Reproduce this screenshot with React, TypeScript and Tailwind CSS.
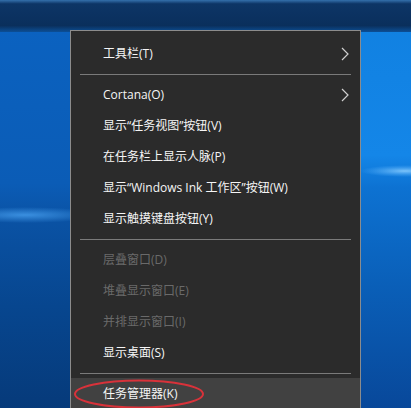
import React from "react";

type Item = { label: string; disabled?: boolean; arrow?: boolean; active?: boolean } | "sep";

const items: Item[] = [
  { label: "工具栏(T)", arrow: true },
  "sep",
  { label: "Cortana(O)", arrow: true },
  { label: "显示“任务视图”按钮(V)" },
  { label: "在任务栏上显示人脉(P)" },
  { label: "显示“Windows Ink 工作区”按钮(W)" },
  { label: "显示触摸键盘按钮(Y)" },
  "sep",
  { label: "层叠窗口(D)", disabled: true },
  { label: "堆叠显示窗口(E)", disabled: true },
  { label: "并排显示窗口(I)", disabled: true },
  { label: "显示桌面(S)" },
  "sep",
  { label: "任务管理器(K)", active: true },
];

function Wallpaper() {
  return (
    <svg className="absolute inset-0" width="411" height="408" viewBox="0 0 411 408">
      <defs>
        <linearGradient id="leftg" x1="0" y1="0" x2="0" y2="1">
          <stop offset="0" stopColor="#0b63c2" />
          <stop offset="0.45" stopColor="#0b5cb6" />
          <stop offset="0.54" stopColor="#0a52a4" />
          <stop offset="0.75" stopColor="#07468f" />
          <stop offset="1" stopColor="#063a7a" />
        </linearGradient>
        <linearGradient id="rightg" x1="0" y1="0" x2="0" y2="1">
          <stop offset="0" stopColor="#1080e0" />
          <stop offset="0.38" stopColor="#1486e8" />
          <stop offset="0.46" stopColor="#0d72d2" />
          <stop offset="0.7" stopColor="#0a5fb8" />
          <stop offset="1" stopColor="#08489a" />
        </linearGradient>
        <linearGradient id="topg" x1="0" y1="0" x2="0" y2="1">
          <stop offset="0" stopColor="#3470ac" />
          <stop offset="0.12" stopColor="#0d3566" />
          <stop offset="0.8" stopColor="#0a2f5c" />
          <stop offset="1" stopColor="#0c4f96" />
        </linearGradient>
        <radialGradient id="streakL" cx="0.5" cy="0.5" r="0.5">
          <stop offset="0" stopColor="#4aa3f2" stopOpacity="0.75" />
          <stop offset="1" stopColor="#4aa3f2" stopOpacity="0" />
        </radialGradient>
        <radialGradient id="streakR" cx="0.5" cy="0.5" r="0.5">
          <stop offset="0" stopColor="#8fd0ff" stopOpacity="0.85" />
          <stop offset="1" stopColor="#5ab4ff" stopOpacity="0" />
        </radialGradient>
      </defs>
      <rect x="0" y="0" width="411" height="408" fill="url(#leftg)" />
      <rect x="300" y="0" width="111" height="408" fill="url(#rightg)" />
      <rect x="0" y="0" width="411" height="32" fill="url(#topg)" />
      <ellipse cx="25" cy="215" rx="75" ry="8" fill="url(#streakL)" />
      <ellipse cx="405" cy="171" rx="45" ry="6" fill="url(#streakR)" />
    </svg>
  );
}

function Chevron() {
  return (
    <svg width="8" height="14" viewBox="0 0 8 14" className="absolute right-[11px] top-1/2 -translate-y-1/2">
      <path d="M1 1 L7 7 L1 13" fill="none" stroke="#d0d0d0" strokeWidth="1.2" />
    </svg>
  );
}

export default function App() {
  return (
    <div
      className="relative w-[411px] h-[408px] overflow-hidden"
      style={{ fontFamily: '"Segoe UI", "Open Sans", "Noto Sans CJK SC", sans-serif' }}
    >
      <Wallpaper />
      <div className="absolute left-[70px] top-[30px] w-[291px] h-[400px] bg-[#2b2b2b] border border-[#8c8c8c] pt-[7px]">
        {items.map((it, i) =>
          it === "sep" ? (
            <div key={i} className="h-[10px] flex items-center px-[9px]">
              <div className="h-px w-full bg-[#7a7a7a]" />
            </div>
          ) : (
            <div
              key={i}
              className={`relative h-[31px] flex items-center pl-[32px] text-[12px] ${
                it.disabled ? "text-[#6a6a6a]" : "text-[#f5f5f5]"
              } ${it.active ? "bg-[#414141]" : ""}`}
            >
              <span className="whitespace-pre">{it.label}</span>
              {it.arrow && <Chevron />}
            </div>
          )
        )}
      </div>
      <svg className="absolute left-0 top-0 pointer-events-none" width="411" height="408">
        <ellipse cx="139" cy="394" rx="64" ry="13.5" fill="none" stroke="#d8323a" strokeWidth="2" />
      </svg>
    </div>
  );
}
